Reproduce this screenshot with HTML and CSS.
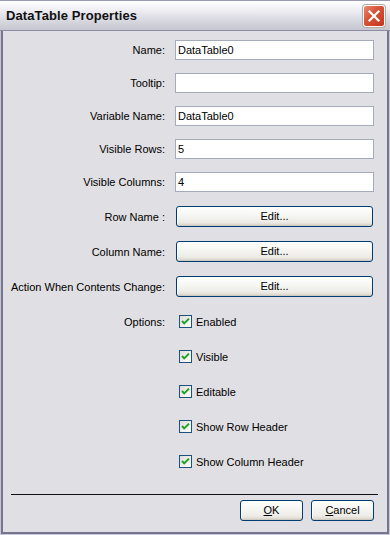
FILE: index.html
```html
<!DOCTYPE html>
<html>
<head>
<meta charset="utf-8">
<link rel="stylesheet" href="styles.css">
</head>
<body>
<div class="window">
  <div class="titlebar">
    <span class="title">DataTable Properties</span>
    <span class="close">
      <svg width="20" height="20" viewBox="0 0 20 20"><path d="M5.5 5.5 L14.5 14.5 M14.5 5.5 L5.5 14.5" stroke="#fff" stroke-width="2.2" stroke-linecap="square"/></svg>
    </span>
  </div>
  <div class="content">
    <div class="form">
      <div class="row r-input"><label class="lbl">Name:</label><div class="input">DataTable0</div></div>
      <div class="row r-input"><label class="lbl">Tooltip:</label><div class="input"></div></div>
      <div class="row r-input"><label class="lbl">Variable Name:</label><div class="input">DataTable0</div></div>
      <div class="row r-input"><label class="lbl">Visible Rows:</label><div class="input">5</div></div>
      <div class="row r-input last-input"><label class="lbl">Visible Columns:</label><div class="input">4</div></div>
      <div class="row r-btn"><label class="lbl">Row Name :</label><div class="btn wide">Edit...</div></div>
      <div class="row r-btn"><label class="lbl">Column Name:</label><div class="btn wide">Edit...</div></div>
      <div class="row r-btn"><label class="lbl">Action When Contents Change:</label><div class="btn wide">Edit...</div></div>
      <div class="row r-btn"><label class="lbl">Options:</label><div class="check"><span class="box"><svg width="11" height="11" viewBox="0 0 11 11"><path d="M2 5 L4.2 7.4 L9 2.6" fill="none" stroke="#21a121" stroke-width="2"/></svg></span>Enabled</div></div>
      <div class="row r-btn"><label class="lbl"></label><div class="check"><span class="box"><svg width="11" height="11" viewBox="0 0 11 11"><path d="M2 5 L4.2 7.4 L9 2.6" fill="none" stroke="#21a121" stroke-width="2"/></svg></span>Visible</div></div>
      <div class="row r-btn"><label class="lbl"></label><div class="check"><span class="box"><svg width="11" height="11" viewBox="0 0 11 11"><path d="M2 5 L4.2 7.4 L9 2.6" fill="none" stroke="#21a121" stroke-width="2"/></svg></span>Editable</div></div>
      <div class="row r-btn"><label class="lbl"></label><div class="check"><span class="box"><svg width="11" height="11" viewBox="0 0 11 11"><path d="M2 5 L4.2 7.4 L9 2.6" fill="none" stroke="#21a121" stroke-width="2"/></svg></span>Show Row Header</div></div>
      <div class="row r-btn"><label class="lbl"></label><div class="check"><span class="box"><svg width="11" height="11" viewBox="0 0 11 11"><path d="M2 5 L4.2 7.4 L9 2.6" fill="none" stroke="#21a121" stroke-width="2"/></svg></span>Show Column Header</div></div>
    </div>
    <div class="footer">
      <div class="sep"></div>
      <div class="buttons">
        <div class="btn small"><u>O</u>K</div>
        <div class="btn small"><u>C</u>ancel</div>
      </div>
    </div>
  </div>
</div>
</body>
</html>
```

FILE: styles.css
```css
html, body {
  margin: 0;
  padding: 0;
  background: #e0dfe3;
}
body {
  font-family: "Liberation Sans", Arial, sans-serif;
  font-size: 11px;
  color: #000;
}
.window {
  width: 390px;
  height: 535px;
  box-sizing: border-box;
  border: 1px solid #c8c8d2;
  box-shadow: inset 2px 0 0 #75758f, inset -2px 0 0 #75758f, inset 0 -2px 0 #75758f;
  display: flex;
  flex-direction: column;
  background: #e0dfe3;
}
.titlebar {
  height: 29px;
  flex: none;
  display: flex;
  align-items: center;
  justify-content: space-between;
  padding: 0 4px 0 6px;
  background: linear-gradient(#ffffff 0%, #f2f2f6 25%, #dcdce4 60%, #c6c6d0 100%);
  border-bottom: 1px solid #8c8ca4;
  margin: -1px -1px 0;
  border-top: 1px solid #9a9ab0;
}
.title {
  font-weight: bold;
  font-size: 13px;
  color: #111;
  letter-spacing: 0.1px;
}
.close {
  width: 20px;
  height: 20px;
  border-radius: 3px;
  border: 1px solid #fff;
  background: linear-gradient(135deg, #e88a70 0%, #d8553a 40%, #c4361c 100%);
  display: flex;
  align-items: center;
  justify-content: center;
  box-shadow: 0 0 0 1px #b9a8a0;
  margin-right: 1px;
}
.content {
  flex: 1;
  display: flex;
  flex-direction: column;
  padding: 9px 15px 0 0;
}
.form {
  display: flex;
  flex-direction: column;
}
.row {
  display: grid;
  grid-template-columns: 164px 199px;
  column-gap: 10px;
  align-items: center;
}
.r-input {
  height: 20px;
  margin-bottom: 13px;
}
.last-input {
  margin-bottom: 14px;
}
.r-btn {
  height: 21px;
  margin-bottom: 14px;
}
.lbl {
  text-align: right;
  white-space: nowrap;
}
.input {
  height: 20px;
  box-sizing: border-box;
  background: #fff;
  border: 1px solid #a5acb9;
  padding: 0 2px;
  line-height: 18px;
}
.btn {
  box-sizing: border-box;
  border: 1px solid #003c74;
  border-radius: 3px;
  background: linear-gradient(#ffffff 0%, #f6f6f3 40%, #ecebe6 80%, #d6d0c5 100%);
  box-shadow: inset 0 -1px 0 #d0cbc0, inset 1px 0 0 #fff;
  text-align: center;
  height: 21px;
  line-height: 19px;
}
.wide {
  margin: 0 1px;
}
.check {
  display: flex;
  align-items: center;
  gap: 4px;
  padding-left: 4px;
}
.box {
  width: 13px;
  height: 13px;
  box-sizing: border-box;
  border: 1px solid #1c5180;
  background: linear-gradient(135deg, #dcdcd7 0%, #ffffff 100%);
  display: flex;
  align-items: center;
  justify-content: center;
}
.box svg {
  display: block;
}
.footer {
  margin-top: auto;
  padding-bottom: 13px;
}
.sep {
  height: 1px;
  background: #111;
  margin: 0 -4px 0 10px;
}
.buttons {
  display: flex;
  justify-content: flex-end;
  gap: 8px;
  margin-top: 5px;
  margin-right: 0;
}
.btn.small {
  width: 63px;
}
.btn u {
  text-decoration: underline;
}
```
